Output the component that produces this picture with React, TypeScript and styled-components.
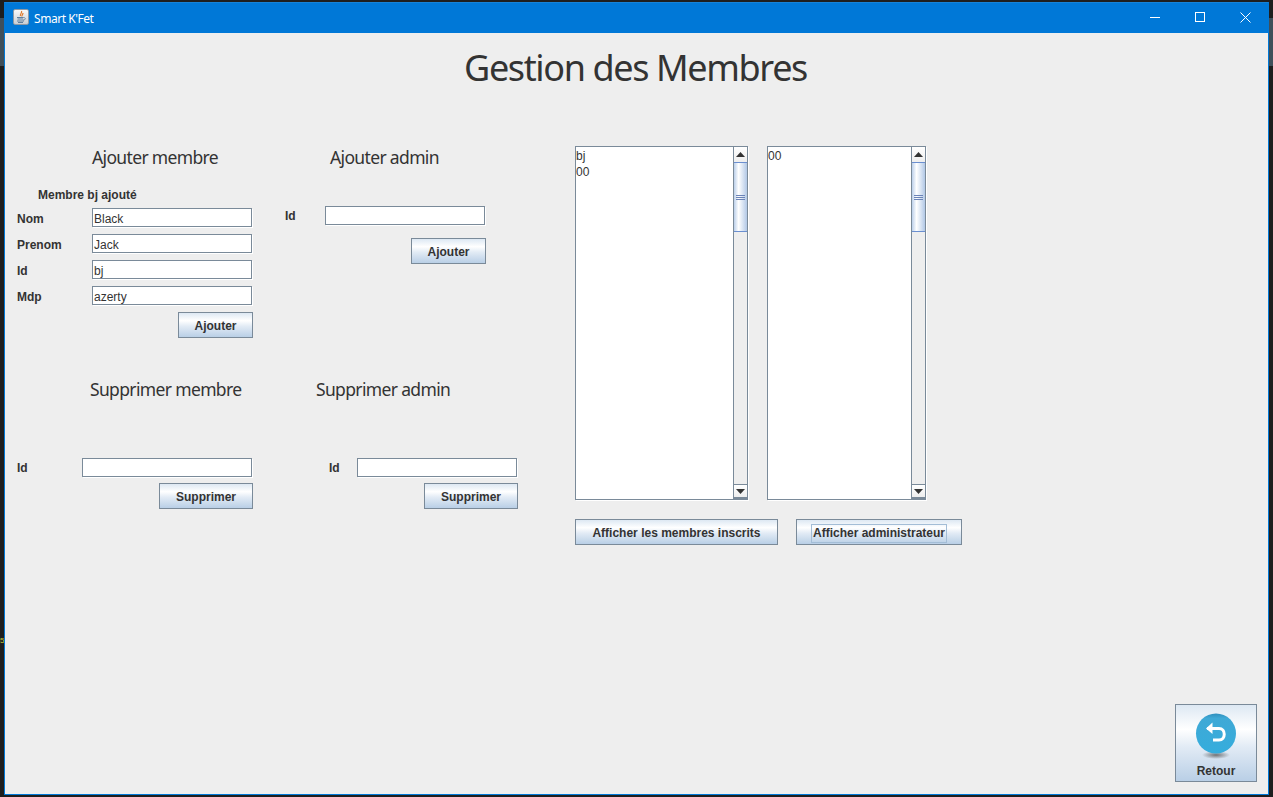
import styled, { createGlobalStyle } from "styled-components";

const Global = createGlobalStyle`
  html, body {
    margin: 0;
    height: 100%;
    background: linear-gradient(#1e1e1e 18px, #3f4f5a 18px, #3f4f5a 66px, #1e1e1e 66px);
    overflow: hidden;
  }
  * {
    box-sizing: border-box;
  }
`

const JavaIcon = () => (
  <IconBox>
    <svg width="14" height="14" viewBox="0 0 14 14">
      <path d="M7.5 1 C8.5 3 5.5 4 6.5 6 M9 3 C9 4.5 7.5 5 8 6.5" stroke="#e07b2c" strokeWidth="1.2" fill="none" />
      <path d="M3 7.5 H9.5 M3.5 9 H9 M3 11 H10 M4 12.5 H9" stroke="#5f7f9c" strokeWidth="1" fill="none" />
      <path d="M9.5 7.5 C12 7.5 12 10 9 10" stroke="#5f7f9c" strokeWidth="0.8" fill="none" />
    </svg>
  </IconBox>
)

const ScrollBar = () => (
  <Scroll>
    <Arrow>
      <svg width="9" height="5" viewBox="0 0 9 5"><path d="M4.5 0 L9 5 H0 Z" fill="#333" /></svg>
    </Arrow>
    <Thumb>
      <Grip />
      <Grip />
      <Grip />
    </Thumb>
    <Track />
    <Arrow $bottom>
      <svg width="9" height="5" viewBox="0 0 9 5"><path d="M0 0 H9 L4.5 5 Z" fill="#333" /></svg>
    </Arrow>
  </Scroll>
)

const Field = ({ label, value = '', labelWidth, lowered }: { label: string; value?: string; labelWidth: number; lowered?: boolean }) => (
  <FieldRow>
    <Label $width={labelWidth} $lowered={lowered}>{label}</Label>
    <Input $width={160}>{value}</Input>
  </FieldRow>
)

const App = () => {
  return (
    <>
      <Global />
      <Stray>5</Stray>
      <Window>
        <TitleBar>
          <JavaIcon />
          <TitleText>Smart K'Fet</TitleText>
          <WinButtons>
            <WinButton>
              <svg width="10" height="10" viewBox="0 0 10 10"><path d="M0 5.5 H10" stroke="#fff" /></svg>
            </WinButton>
            <WinButton>
              <svg width="10" height="10" viewBox="0 0 10 10"><rect x="0.5" y="0.5" width="9" height="9" fill="none" stroke="#fff" /></svg>
            </WinButton>
            <WinButton>
              <svg width="11" height="11" viewBox="0 0 11 11"><path d="M0.5 0.5 L10.5 10.5 M10.5 0.5 L0.5 10.5" stroke="#fff" /></svg>
            </WinButton>
          </WinButtons>
        </TitleBar>

        <Content>
          <PageTitle>Gestion des Membres</PageTitle>

          <Main>
            <Forms>
              <TopRow>
                <MemberBlock>
                  <MemberHeading>Ajouter membre</MemberHeading>
                  <Status>Membre bj ajouté</Status>
                  <Fields>
                    <Field label="Nom" value="Black" labelWidth={75} lowered />
                    <Field label="Prenom" value="Jack" labelWidth={75} lowered />
                    <Field label="Id" value="bj" labelWidth={75} lowered />
                    <Field label="Mdp" value="azerty" labelWidth={75} lowered />
                  </Fields>
                  <ButtonRow>
                    <Button $width={75}>Ajouter</Button>
                  </ButtonRow>
                </MemberBlock>

                <AdminBlock>
                  <AdminHeading>Ajouter admin</AdminHeading>
                  <Field label="Id" labelWidth={40} />
                  <AdminButtonRow>
                    <Button $width={75}>Ajouter</Button>
                  </AdminButtonRow>
                </AdminBlock>
              </TopRow>

              <BottomRow>
                <DeleteMember>
                  <DeleteHeading $indent={73}>Supprimer membre</DeleteHeading>
                  <Field2Row>
                    <Label $width={65}>Id</Label>
                    <Input $width={170}>{''}</Input>
                  </Field2Row>
                  <DeleteButtonRow>
                    <Button $width={94}>Supprimer</Button>
                  </DeleteButtonRow>
                </DeleteMember>

                <DeleteAdmin>
                  <DeleteHeading $indent={0}>Supprimer admin</DeleteHeading>
                  <Field2Row $indent={13}>
                    <Label $width={28}>Id</Label>
                    <Input $width={160}>{''}</Input>
                  </Field2Row>
                  <DeleteButtonRow>
                    <Button $width={94}>Supprimer</Button>
                  </DeleteButtonRow>
                </DeleteAdmin>
              </BottomRow>
            </Forms>

            <Lists>
              <ListsRow>
                <ListBox $width={173}>
                  <ListText>
                    <span>bj</span>
                    <span>00</span>
                  </ListText>
                  <ScrollBar />
                </ListBox>
                <ListBox $width={159}>
                  <ListText>
                    <span>00</span>
                  </ListText>
                  <ScrollBar />
                </ListBox>
              </ListsRow>
              <ListButtons>
                <Button $width={203}>Afficher les membres inscrits</Button>
                <Button $width={166}><Focus>Afficher administrateur</Focus></Button>
              </ListButtons>
            </Lists>
          </Main>

          <Footer>
            <BackButton>
              <svg width="42" height="49" viewBox="0 0 42 49">
                <defs>
                  <radialGradient id="shadow" cx="50%" cy="50%" r="50%">
                    <stop offset="0%" stopColor="#555" stopOpacity="0.8" />
                    <stop offset="100%" stopColor="#555" stopOpacity="0" />
                  </radialGradient>
                  <linearGradient id="disc" x1="0" y1="0" x2="0" y2="1">
                    <stop offset="0%" stopColor="#2f8fbd" />
                    <stop offset="12%" stopColor="#3fa9d6" />
                    <stop offset="100%" stopColor="#35addd" />
                  </linearGradient>
                </defs>
                <ellipse cx="21" cy="42" rx="14" ry="4" fill="url(#shadow)" />
                <circle cx="21" cy="20.5" r="20" fill="url(#disc)" />
                <path d="M12 15.5 H24 C31 15.5 31 27 24 27 H18" fill="none" stroke="#fff" strokeWidth="3" />
                <path d="M17.5 9.5 L11 15.5 L17.5 21 Z" fill="#fff" />
              </svg>
              <BackLabel>Retour</BackLabel>
            </BackButton>
          </Footer>
        </Content>
      </Window>
    </>
  )
};

export default App

const Stray = styled.span`
  position: absolute;
  left: 0;
  top: 636px;
  font: 8px "Liberation Sans", sans-serif;
  color: #c8c83c;
`

const Window = styled.div`
  position: relative;
  margin: 2px 4px 0 4px;
  width: 1265px;
  height: 793px;
  border: 1px solid #0078d7;
  border-top-color: #1683d8;
  display: flex;
  flex-direction: column;
  background: #eeeeee;
`

const TitleBar = styled.div`
  height: 30px;
  flex: none;
  background: #0078d7;
  display: flex;
  align-items: center;
  padding-left: 8px;
`

const IconBox = styled.div`
  width: 16px;
  height: 16px;
  margin-bottom: 2px;
  display: flex;
  align-items: center;
  justify-content: center;
  background: linear-gradient(#f8f8f8, #c9ced4);
  border: 1px solid #8d99a5;
  border-radius: 2px;
`

const TitleText = styled.div`
  margin-left: 5px;
  font: 12px "Noto Sans", sans-serif;
  letter-spacing: -0.45px;
  color: #fff;
`

const WinButtons = styled.div`
  margin-left: auto;
  display: flex;
`

const WinButton = styled.div`
  width: 45px;
  height: 30px;
  padding-bottom: 2px;
  display: flex;
  align-items: center;
  justify-content: center;
  &:not(:last-child) {
    padding-right: 1px;
  }
`

const Content = styled.div`
  flex: 1;
  display: flex;
  flex-direction: column;
  padding-left: 12px;
  font: bold 12px "Liberation Sans", sans-serif;
  color: #333333;
`

const PageTitle = styled.h1`
  margin: 8px 0 0 -12px;
  text-align: center;
  height: 54px;
  padding-right: 2px;
  font: 400 36px/54px "Noto Sans", sans-serif;
  letter-spacing: -1.37px;
  color: #333333;
`

const Main = styled.div`
  display: flex;
  margin-top: 51px;
`

const Forms = styled.div`
  width: 558px;
  margin-top: -1px;
  display: flex;
  flex-direction: column;
`

const TopRow = styled.div`
  display: flex;
  height: 230px;
`

const BottomRow = styled.div`
  display: flex;
  margin-top: 2px;
`

const Heading = styled.h2`
  margin: 0;
  height: 24px;
  font: 400 17.5px/24px "Noto Sans", sans-serif;
  letter-spacing: -0.65px;
  color: #333333;
`

const MemberBlock = styled.div`
  width: 236px;
`

const MemberHeading = styled(Heading)`
  padding-left: 75px;
`

const Status = styled.div`
  margin-top: 18px;
  padding-left: 21px;
  height: 16px;
  line-height: 16px;
`

const Fields = styled.div`
  margin-top: 5px;
  display: flex;
  flex-direction: column;
  gap: 7px;
`

const FieldRow = styled.div`
  display: flex;
  align-items: center;
  height: 19px;
`

const Label = styled.div<{ $width: number; $lowered?: boolean }>`
  width: ${p => p.$width}px;
  flex: none;
  padding-top: ${p => (p.$lowered ? 2 : 0)}px;
`

const Input = styled.div<{ $width: number }>`
  width: ${p => p.$width}px;
  height: 19px;
  flex: none;
  background: #fff;
  border: 1px solid #7a8a99;
  box-shadow: 1px 1px 0 #fff;
  padding: 2px 0 0 1px;
  font: 12px/16px "Liberation Sans", sans-serif;
`

const ButtonRow = styled.div`
  margin-top: 7px;
  display: flex;
  justify-content: flex-end;
`

const DeleteButtonRow = styled(ButtonRow)`
  margin-top: 6px;
`

const Button = styled.div<{ $width: number }>`
  width: ${p => p.$width}px;
  height: 26px;
  padding-top: 2px;
  display: flex;
  align-items: center;
  justify-content: center;
  border: 1px solid #7a8a99;
  background: linear-gradient(#dde8f3 0%, #ffffff 32%, #e2ebf5 55%, #b9cfe6 100%);
  font: bold 12px "Liberation Sans", sans-serif;
  color: #333333;
`

const Focus = styled.span`
  outline: 1px solid #a3bdd6;
  padding: 1px;
  line-height: 15px;
`

const AdminBlock = styled.div`
  margin-left: 32px;
  width: 201px;
  display: flex;
  flex-direction: column;
`

const AdminHeading = styled(Heading)`
  padding-left: 45px;
  margin-bottom: 37px;
`

const AdminButtonRow = styled(ButtonRow)`
  margin-top: 13px;
`

const DeleteMember = styled.div`
  width: 236px;
`

const DeleteAdmin = styled.div`
  margin-left: 63px;
  width: 202px;
`

const DeleteHeading = styled(Heading) <{ $indent: number }>`
  padding-left: ${p => p.$indent}px;
  margin-bottom: 57px;
  white-space: nowrap;
`

const Field2Row = styled(FieldRow) <{ $indent?: number }>`
  padding-left: ${p => p.$indent || 0}px;
`

const Lists = styled.div``

const ListsRow = styled.div`
  display: flex;
  gap: 19px;
`

const ListBox = styled.div<{ $width: number }>`
  width: ${p => p.$width}px;
  height: 354px;
  display: flex;
  background: #fff;
  border-left: 1px solid #7a8a99;
  border-top: 1px solid #7a8a99;
  border-bottom: 1px solid #7a8a99;
  box-shadow: 1px 1px 0 #fff;
`

const ListText = styled.div`
  flex: 1;
  display: flex;
  flex-direction: column;
  padding-top: 1px;
  font: 12px/16px "Liberation Sans", sans-serif;
  color: #333333;
`

const Scroll = styled.div`
  width: 15px;
  flex: none;
  display: flex;
  flex-direction: column;
  background: #eeeeee;
  border-left: 1px solid #7a8a99;
  border-right: 1px solid #7a8a99;
`

const Arrow = styled.div<{ $bottom?: boolean }>`
  height: 15px;
  flex: none;
  background: linear-gradient(#ffffff, #eeeeee);
  border-top: ${p => (p.$bottom ? '1px solid #7a8a99' : 'none')};
  border-bottom: ${p => (p.$bottom ? '2px solid #7a8a99' : 'none')};
  display: flex;
  align-items: center;
  justify-content: center;
`

const Thumb = styled.div`
  height: 70px;
  flex: none;
  display: flex;
  flex-direction: column;
  align-items: center;
  justify-content: center;
  gap: 1px;
  background: linear-gradient(90deg, #bcd0ea 0%, #ffffff 35%, #d6e2f2 70%, #b2c8e6 100%);
  border-top: 1px solid #6b8fd0;
  border-bottom: 1px solid #6b8fd0;
`

const Grip = styled.div`
  width: 9px;
  height: 1px;
  background: #6b84b8;
`

const Track = styled.div`
  flex: 1;
`

const ListButtons = styled.div`
  margin-top: 19px;
  display: flex;
  gap: 18px;
`

const Footer = styled.div`
  margin-top: auto;
  display: flex;
  justify-content: flex-end;
  padding: 0 11px 12px 0;
`

const BackButton = styled.div`
  width: 82px;
  height: 78px;
  display: flex;
  flex-direction: column;
  align-items: center;
  padding-top: 8px;
  border: 1px solid #7a8a99;
  background: linear-gradient(#dde8f3 0%, #ffffff 32%, #e2ebf5 55%, #b9cfe6 100%);
`

const BackLabel = styled.div`
  margin-top: 2px;
  font: bold 12px/14px "Liberation Sans", sans-serif;
  color: #333333;
`
